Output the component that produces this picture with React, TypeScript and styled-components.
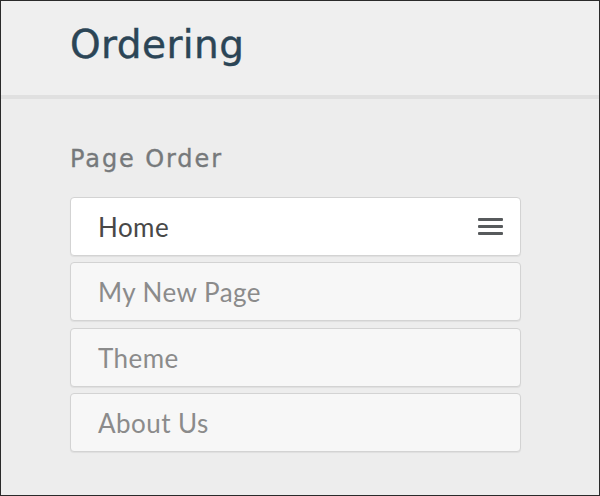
import React from "react";
import styled, { createGlobalStyle } from "styled-components";

const Global = createGlobalStyle`
  html, body { margin: 0; padding: 0; background: #ededed; }
  * { box-sizing: border-box; }
`;

const Frame = styled.div`
  width: 600px;
  height: 496px;
  border: 1px solid #2a2a2a;
  background: #ededed;
  display: flex;
  flex-direction: column;
  overflow: hidden;
`;

const Header = styled.header`
  height: 98px;
  padding: 21px 0 0 69px;
  background: #efefef;
  border-bottom: 4px solid #e0e0e0;
`;

const Title = styled.h1`
  margin: 0;
  font-family: "DejaVu Sans", "Noto Sans", sans-serif;
  font-weight: 400;
  font-size: 39px;
  line-height: 46px;
  color: #2b4556;
  letter-spacing: 0.4px;
  -webkit-text-stroke: 0.4px #2b4556;
`;

const Section = styled.section`
  padding: 46px 78px 0 69px;
`;

const SectionTitle = styled.h2`
  margin: 0 0 23px;
  font-family: "DejaVu Sans", "Noto Sans", sans-serif;
  font-weight: 400;
  font-size: 24px;
  line-height: 29px;
  letter-spacing: 1.9px;
  color: #76797b;
  -webkit-text-stroke: 0.35px #76797b;
`;

const List = styled.ul`
  list-style: none;
  margin: 0;
  padding: 0;
  display: flex;
  flex-direction: column;
  gap: 6.33px;
`;

const Item = styled.li<{ $active?: boolean }>`
  height: 59px;
  display: flex;
  align-items: center;
  justify-content: space-between;
  padding: 1px 17px 0 27px;
  border: 1px solid #d3d3d3;
  border-radius: 4px;
  background: ${(p) => (p.$active ? "#ffffff" : "#f7f7f7")};
  box-shadow: 0 1px 1px rgba(0, 0, 0, 0.06);
  font-family: Lato, "Liberation Sans", sans-serif;
  font-size: 26px;
  letter-spacing: 0.45px;
  color: ${(p) => (p.$active ? "#484848" : "#8b8b8b")};
`;

const Handle = styled.span`
  display: flex;
  flex-direction: column;
  gap: 4px;
  width: 25px;
  margin-top: -2px;
`;

const Bar = styled.span`
  display: block;
  height: 3px;
  background: #575a5c;
  border-radius: 1px;
`;

const pages = ["Home", "My New Page", "Theme", "About Us"];

export default function App() {
  return (
    <>
      <Global />
      <Frame>
        <Header>
          <Title>Ordering</Title>
        </Header>
        <Section>
          <SectionTitle>Page Order</SectionTitle>
          <List>
            {pages.map((p, i) => (
              <Item key={p} $active={i === 0}>
                <span>{p}</span>
                {i === 0 && (
                  <Handle>
                    <Bar />
                    <Bar />
                    <Bar />
                  </Handle>
                )}
              </Item>
            ))}
          </List>
        </Section>
      </Frame>
    </>
  );
}
